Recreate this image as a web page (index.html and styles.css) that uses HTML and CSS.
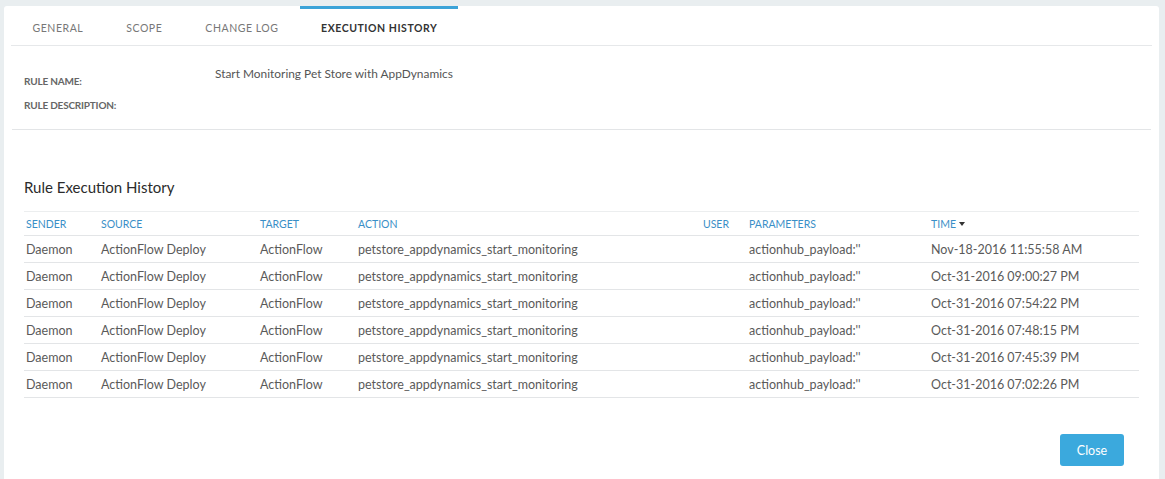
FILE: index.html
```html
<!DOCTYPE html>
<html>
<head>
<meta charset="utf-8">
<link rel="stylesheet" href="styles.css">
</head>
<body>
<div class="card">
  <nav class="tabs">
    <div class="tab">GENERAL</div>
    <div class="tab">SCOPE</div>
    <div class="tab">CHANGE LOG</div>
    <div class="tab active">EXECUTION HISTORY</div>
  </nav>
  <section class="info">
    <div class="labels">
      <div class="label">RULE NAME:</div>
      <div class="label">RULE DESCRIPTION:</div>
    </div>
    <div class="value">Start Monitoring Pet Store with AppDynamics</div>
  </section>
  <section class="history">
    <h2 class="title">Rule Execution History</h2>
    <table class="grid">
      <colgroup>
        <col class="c-sender"><col class="c-source"><col class="c-target"><col class="c-action"><col class="c-user"><col class="c-params"><col class="c-time">
      </colgroup>
      <thead>
        <tr><th>SENDER</th><th>SOURCE</th><th>TARGET</th><th>ACTION</th><th class="right">USER</th><th>PARAMETERS</th><th>TIME<span class="caret"></span></th></tr>
      </thead>
      <tbody>
        <tr><td>Daemon</td><td>ActionFlow Deploy</td><td>ActionFlow</td><td>petstore_appdynamics_start_monitoring</td><td></td><td>actionhub_payload:''</td><td>Nov-18-2016 11:55:58 AM</td></tr>
        <tr><td>Daemon</td><td>ActionFlow Deploy</td><td>ActionFlow</td><td>petstore_appdynamics_start_monitoring</td><td></td><td>actionhub_payload:''</td><td>Oct-31-2016 09:00:27 PM</td></tr>
        <tr><td>Daemon</td><td>ActionFlow Deploy</td><td>ActionFlow</td><td>petstore_appdynamics_start_monitoring</td><td></td><td>actionhub_payload:''</td><td>Oct-31-2016 07:54:22 PM</td></tr>
        <tr><td>Daemon</td><td>ActionFlow Deploy</td><td>ActionFlow</td><td>petstore_appdynamics_start_monitoring</td><td></td><td>actionhub_payload:''</td><td>Oct-31-2016 07:48:15 PM</td></tr>
        <tr><td>Daemon</td><td>ActionFlow Deploy</td><td>ActionFlow</td><td>petstore_appdynamics_start_monitoring</td><td></td><td>actionhub_payload:''</td><td>Oct-31-2016 07:45:39 PM</td></tr>
        <tr><td>Daemon</td><td>ActionFlow Deploy</td><td>ActionFlow</td><td>petstore_appdynamics_start_monitoring</td><td></td><td>actionhub_payload:''</td><td>Oct-31-2016 07:02:26 PM</td></tr>
      </tbody>
    </table>
  </section>
  <footer class="actions">
    <button class="btn">Close</button>
  </footer>
</div>
</body>
</html>
```
FILE: styles.css
```css
html, body {
  margin: 0;
  padding: 0;
}
body {
  background: #e9eef0;
  font-family: "Lato", "Open Sans", sans-serif;
  color: #555;
  height: 479px;
  overflow: hidden;
}
.card {
  margin: 6px 6px 0 4px;
  background: #fff;
  border-radius: 3px 3px 0 0;
  height: 520px;
}
.tabs {
  display: flex;
  margin: 0 7px;
  border-bottom: 1px solid #e6e8ea;
  height: 39px;
}
.tab {
  font-size: 10.5px;
  letter-spacing: 0.55px;
  color: #777;
  padding: 14px 21.5px 0 21.5px;
  border-top: 2px solid transparent;
  box-sizing: border-box;
}
.tab.active {
  color: #333;
  font-weight: 700;
  letter-spacing: 0.55px;
  border-top: 3px solid #3ba3d8;
  padding-top: 13px;
  padding-left: 21px;
  padding-right: 21px;
}
.info {
  display: flex;
  margin: 0 8px;
  border-bottom: 1px solid #e3e5e7;
  height: 83px;
}
.labels {
  padding: 28px 0 0 12px;
  box-sizing: border-box;
  width: 203px;
}
.label {
  font-size: 10px;
  font-weight: 700;
  letter-spacing: -0.2px;
  color: #666;
  height: 24px;
  line-height: 14px;
}
.value {
  padding-top: 20px;
  font-size: 11.9px;
  color: #555;
}
.history {
  padding: 0 20px;
}
.title {
  margin: 47px 0 14px 0;
  font-size: 15px;
  font-weight: 400;
  color: #2b2b2b;
  line-height: 20px;
}
.grid {
  width: 100%;
  border-collapse: collapse;
  table-layout: fixed;
}
.c-sender { width: 75px; }
.c-source { width: 159px; }
.c-target { width: 98px; }
.c-action { width: 310px; }
.c-user { width: 81px; }
.c-params { width: 182px; }
.c-time { width: auto; }
.grid th {
  font-size: 10.5px;
  font-weight: 400;
  color: #3a8fc7;
  text-align: left;
  height: 23px;
  padding: 0 2px;
  border-top: 1px solid #eceeef;
  border-bottom: 1px solid #e3e5e7;
}
.grid th.right {
  text-align: right;
  padding-right: 18px;
}
.caret {
  display: inline-block;
  margin-left: 3px;
  vertical-align: 2px;
  border-left: 3.5px solid transparent;
  border-right: 3.5px solid transparent;
  border-top: 4px solid #333;
}
.grid td {
  font-size: 12.5px;
  color: #5a5a5a;
  height: 26px;
  padding: 0 2px;
  border-bottom: 1px solid #e3e5e7;
  white-space: nowrap;
}
.actions {
  display: flex;
  justify-content: flex-end;
  padding: 36px 35px 0 0;
}
.btn {
  background: #3ba9dd;
  color: #fff;
  border: none;
  border-radius: 3px;
  font-family: inherit;
  font-size: 12.5px;
  width: 64px;
  height: 32px;
}
```
